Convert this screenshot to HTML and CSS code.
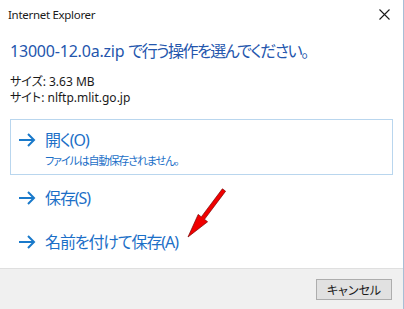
FILE: index.html
```html
<!DOCTYPE html>
<html lang="ja">
<head>
    <meta charset="UTF-8">
    <title>Internet Explorer</title>
    <link rel="stylesheet" href="styles.css">
</head>
<body>
    <div class="dialog">
        <div class="titlebar">
            <span class="title">Internet Explorer</span>
            <svg class="close" width="11" height="11" viewBox="0 0 11 11">
                <path d="M0.5 0.5 L10.5 10.5 M10.5 0.5 L0.5 10.5" stroke="#1a1a1a" stroke-width="1.1" fill="none"/>
            </svg>
        </div>

        <div class="content">
            <h1 class="instruction">13000-12.0a.zip <span class="ja">で行う操作を選んでください。</span></h1>
            <div class="info">
                <div>サイズ: 3.63 MB</div>
                <div>サイト: nlftp.mlit.go.jp</div>
            </div>

            <div class="option selected">
                <div class="option-main">
                    <svg class="arrow" width="18" height="14" viewBox="0 0 18 14">
                        <path d="M1 7 H16 M10 1 L16 7 L10 13" stroke="#1979ca" stroke-width="2" fill="none"/>
                    </svg>
                    <span>開く(O)</span>
                </div>
                <div class="option-note">ファイルは自動保存されません。</div>
            </div>

            <div class="option save">
                <div class="option-main">
                    <svg class="arrow" width="18" height="14" viewBox="0 0 18 14">
                        <path d="M1 7 H16 M10 1 L16 7 L10 13" stroke="#1979ca" stroke-width="2" fill="none"/>
                    </svg>
                    <span>保存(S)</span>
                </div>
            </div>

            <div class="option save-as">
                <div class="option-main">
                    <svg class="arrow" width="18" height="14" viewBox="0 0 18 14">
                        <path d="M1 7 H16 M10 1 L16 7 L10 13" stroke="#1979ca" stroke-width="2" fill="none"/>
                    </svg>
                    <span>名前を付けて保存(A)</span>
                </div>
            </div>
        </div>

        <div class="footer">
            <button class="cancel">キャンセル</button>
        </div>

        <!-- red annotation arrow drawn over the dialog -->
        <svg class="annotation" width="404" height="309" viewBox="0 0 404 309">
            <polygon points="225.6,191.2 204.5,219.3 207.6,221.8 188,237 198.2,214.4 201.3,216.9 222.4,188.8"
                     fill="#f00000" stroke="#7a0000" stroke-width="0.7" stroke-linejoin="round"/>
        </svg>
    </div>
</body>
</html>
```

FILE: styles.css
```css
* {
    margin: 0;
    padding: 0;
    box-sizing: border-box;
}

body {
    width: 404px;
    height: 309px;
    background: #ffffff;
    font-family: "Noto Sans", "Noto Sans CJK JP", sans-serif;
    overflow: hidden;
}

.dialog {
    position: relative;
    width: 404px;
    height: 309px;
    display: flex;
    flex-direction: column;
    border-right: 1px solid #a7bed6;
}

.titlebar {
    height: 28px;
    display: flex;
    align-items: center;
    justify-content: space-between;
    padding: 0 13px 0 8px;
}

.title {
    font-size: 11.5px;
    letter-spacing: -0.3px;
    color: #1a1a1a;
}

.close {
    display: block;
}

.content {
    flex: 1;
    padding: 12px 10px 0 10px;
}

.instruction {
    font-size: 16px;
    font-weight: normal;
    line-height: 22px;
    color: #2456ad;
    font-feature-settings: "palt";
    letter-spacing: -0.2px;
    white-space: nowrap;
}

.instruction .ja {
    letter-spacing: -1.5px;
}

.info {
    margin-top: 12px;
    font-size: 12px;
    line-height: 16px;
    color: #1a1a1a;
    font-feature-settings: "palt";
}

.option {
    border: 1px solid transparent;
    padding: 0 0 0 7px;
    color: #1c6fc7;
    font-feature-settings: "palt";
}

.option-main {
    display: flex;
    align-items: center;
    gap: 9px;
    font-size: 16px;
    line-height: 22px;
    letter-spacing: -1.1px;
}

.arrow {
    display: block;
}

.option-note {
    margin: 2px 0 0 27px;
    font-size: 11px;
    line-height: 16px;
    letter-spacing: -1.1px;
}

.selected {
    margin-top: 13px;
    height: 56px;
    padding-top: 9px;
    border-color: #b9d6ee;
}

.save {
    margin-top: 11px;
}

.save-as {
    margin-top: 20px;
}

.footer {
    height: 41px;
    background: #f0f0f0;
    border-top: 1px solid #dfdfdf;
    display: flex;
    justify-content: flex-end;
    align-items: flex-start;
    padding: 10px 11px 0 0;
}

.cancel {
    width: 76px;
    height: 21px;
    background: #e1e1e1;
    border: 1px solid #adadad;
    font-family: "Noto Sans CJK JP", sans-serif;
    font-size: 12px;
    color: #1a1a1a;
    font-feature-settings: "palt";
}

.annotation {
    position: absolute;
    top: 0;
    left: 0;
    pointer-events: none;
}
```
